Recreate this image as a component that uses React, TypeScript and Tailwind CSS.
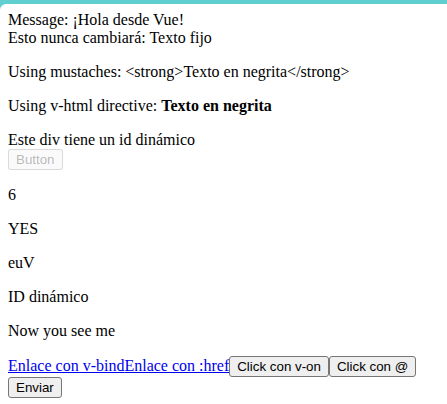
import React from 'react'

const btn =
  "inline-block align-baseline rounded-[3px] border border-[#767676] bg-[#efefef] px-[7px] py-[2px] font-['Liberation_Sans',Arial,sans-serif] text-[13.333px] leading-[normal] text-black"

const App = () => {
  const message = '¡Hola desde Vue!'
  const rawHtml = '<strong>Texto en negrita</strong>'

  return (
    <div className="min-h-[404px] w-full bg-[#5fcfd1] pt-[4px]">
      <div className="min-h-[400px] rounded-tl-[6px] bg-white px-2 pt-[7px] font-['Liberation_Serif','Times_New_Roman',serif] text-[16px] leading-[normal] text-black">
        {/* Interpolation */}
        <div>
          Message: {message}
          <br />
          Esto nunca cambiará: Texto fijo
        </div>

        <p className="my-4">Using mustaches: {rawHtml}</p>
        <p className="my-4">
          Using v-html directive: <strong className="font-bold">Texto en negrita</strong>
        </p>

        {/* Attribute bindings */}
        <div id="dynamic-id">Este div tiene un id dinámico</div>
        <button
          disabled
          className="rounded-[3px] border border-[#76767640] bg-[#efefef4d] px-[7px] py-[2px] font-['Liberation_Sans',Arial,sans-serif] text-[13.333px] leading-[normal] text-[#1010104d]"
        >
          Button
        </button>

        {/* JS expressions */}
        <p className="my-4">6</p>
        <p className="my-4">YES</p>
        <p className="my-4">euV</p>
        <p className="my-4">ID dinámico</p>
        <p className="my-4">Now you see me</p>

        {/* Directives */}
        <div>
          <a href="#" className="text-[#0000ee] underline">
            Enlace con v-bind
          </a>
          <a href="#" className="text-[#0000ee] underline">
            Enlace con :href
          </a>
          <button className={btn}>Click con v-on</button>
          <button className={btn}>Click con @</button>
        </div>
        <form onSubmit={(e) => e.preventDefault()}>
          <button type="submit" className={btn}>
            Enviar
          </button>
        </form>
      </div>
    </div>
  )
}

export default App
